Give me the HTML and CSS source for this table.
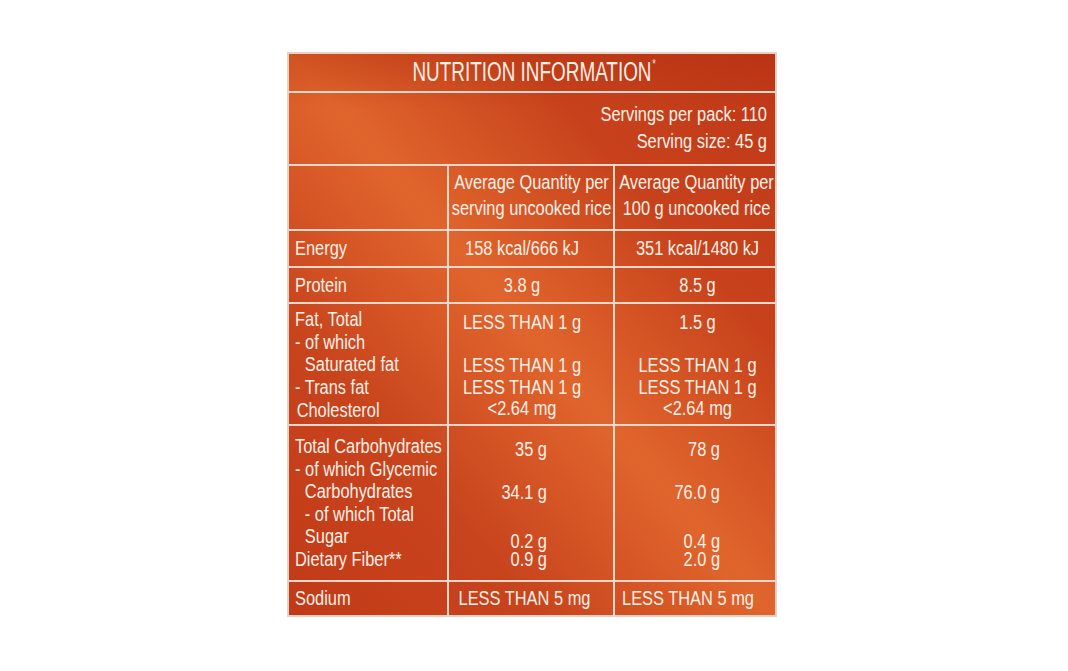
FILE: index.html
```html
<!DOCTYPE html>
<html lang="en">
<head>
<meta charset="utf-8">
<title>Nutrition Information</title>
<link rel="stylesheet" href="styles.css">
</head>
<body>
<div class="panel">
  <div class="title"><div class="sx tx">NUTRITION INFORMATION<sup class="star">*</sup></div></div>
  <div class="servings">
    <div class="sx">
      <div>Servings per pack: 110</div>
      <div>Serving size: 45 g</div>
    </div>
  </div>
  <div class="row header">
    <div class="c1"></div>
    <div class="c2"><div class="sx"><div>Average Quantity per</div><div>serving uncooked rice</div></div></div>
    <div class="c3"><div class="sx"><div>Average Quantity per</div><div>100 g uncooked rice</div></div></div>
  </div>
  <div class="row energy">
    <div class="c1 label"><div class="sx">Energy</div></div>
    <div class="c2 val2"><div class="sx">158 kcal/666 kJ</div></div>
    <div class="c3 val3"><div class="sx">351 kcal/1480 kJ</div></div>
  </div>
  <div class="row protein">
    <div class="c1 label"><div class="sx">Protein</div></div>
    <div class="c2 val2"><div class="sx">3.8 g</div></div>
    <div class="c3 val3"><div class="sx">8.5 g</div></div>
  </div>
  <div class="row fat">
    <div class="c1 labels">
      <div class="sx">
        <div>Fat, Total</div>
        <div>- of which</div>
        <div class="ind">Saturated fat</div>
        <div>- Trans fat</div>
        <div class="ind1">Cholesterol</div>
      </div>
    </div>
    <div class="c2 val2 lines">
      <div class="sx">
        <div>LESS THAN 1 g</div>
        <div class="blank"></div>
        <div>LESS THAN 1 g</div>
        <div>LESS THAN 1 g</div>
        <div>&lt;2.64 mg</div>
      </div>
    </div>
    <div class="c3 val3 lines">
      <div class="sx">
        <div>1.5 g</div>
        <div class="blank"></div>
        <div>LESS THAN 1 g</div>
        <div>LESS THAN 1 g</div>
        <div>&lt;2.64 mg</div>
      </div>
    </div>
  </div>
  <div class="row carbs">
    <div class="c1 labels">
      <div class="sx">
        <div>Total Carbohydrates</div>
        <div>- of which Glycemic</div>
        <div class="ind">Carbohydrates</div>
        <div class="ind">- of which Total</div>
        <div class="ind">Sugar</div>
        <div>Dietary Fiber**</div>
      </div>
    </div>
    <div class="c2 cval2">
      <div class="sx">
        <div class="cl">35 g</div>
        <div class="cl blank"></div>
        <div class="cl">34.1 g</div>
        <div class="cl blank"></div>
        <div class="tight"><div>0.2 g</div><div>0.9 g</div></div>
      </div>
    </div>
    <div class="c3 cval3">
      <div class="sx">
        <div class="cl">78 g</div>
        <div class="cl blank"></div>
        <div class="cl">76.0 g</div>
        <div class="cl blank"></div>
        <div class="tight"><div>0.4 g</div><div>2.0 g</div></div>
      </div>
    </div>
  </div>
  <div class="row sodium">
    <div class="c1 label"><div class="sx">Sodium</div></div>
    <div class="c2 sval2"><div class="sx">LESS THAN 5 mg</div></div>
    <div class="c3 sval3"><div class="sx">LESS THAN 5 mg</div></div>
  </div>
</div>
</body>
</html>
```
FILE: styles.css
```css
* { box-sizing: border-box; }
html, body { margin: 0; padding: 0; background: #ffffff; }
body {
  font-family: "Liberation Sans", Arial, sans-serif;
  font-size: 20px;
  color: #fcefe6;
}
.panel {
  margin: 52px 0 0 287px;
  width: 490px;
  height: 565px;
  border: 2px solid #e9d0c5;
  background:
    linear-gradient(to bottom, rgba(175, 45, 12, 0.35) 0px, rgba(175, 45, 12, 0) 55px),
    linear-gradient(to bottom left,
      #c03818 0%, #c7421c 26%, #d75826 41%, #e0652d 50%, #d85927 59%, #c8441d 74%, #c13a18 100%);
  display: flex;
  flex-direction: column;
}
/* condensed lettering: each cell's text block is drawn narrower */
.sx {
  width: calc(100% / 0.82);
  transform: scaleX(0.82);
  transform-origin: left top;
  white-space: nowrap;
}
.title {
  height: 39px;
  border-bottom: 2px solid #f1d8cb;
  text-align: center;
  font-size: 27px;
  line-height: 37px;
}
.title .tx {
  width: calc(100% / 0.70);
  transform: scaleX(0.70);
  padding-left: 6px;
}
.star {
  font-size: 13px;
  vertical-align: top;
  line-height: 1;
  position: relative;
  top: 3px;
  margin-left: 1px;
}
.servings {
  height: 73px;
  border-bottom: 2px solid #f1d8cb;
  text-align: right;
  padding: 8px 8px 0 0;
  line-height: 26.5px;
}
.row {
  display: flex;
  border-bottom: 2px solid #f1d8cb;
}
.row.sodium { border-bottom: none; }
.c1 {
  width: 160px;
  border-right: 2px solid #f1d8cb;
  flex: none;
}
.c2 {
  width: 166px;
  border-right: 2px solid #f1d8cb;
  flex: none;
  text-align: center;
}
.c3 {
  flex: 1;
  min-width: 0;
  text-align: center;
}
.header { height: 65px; }
.header .c2, .header .c3 { line-height: 26px; padding-top: 3px; }
.header .c2 { padding-left: 1px; }
.header .c3 { padding-left: 3px; }

.energy { height: 37px; line-height: 35px; }
.protein { height: 36px; line-height: 34px; }
.sodium { height: 33px; line-height: 33px; }

.label { padding-left: 6px; }
.val2 { padding-right: 18px; }
.val3 { padding-left: 5px; }
.sval2 { padding-right: 13px; }
.sval3 { padding-right: 14px; }

.fat { height: 122px; }
.labels { padding-left: 6px; line-height: 22.7px; }
.fat .labels { padding-top: 4px; }
.ind { padding-left: 12px; }
.ind1 { padding-left: 2px; }
.lines { line-height: 21.5px; padding-top: 8px; }
.blank { height: 21.5px; }

.carbs { height: 156px; }
.carbs .labels { padding-top: 9px; line-height: 22.6px; }
.cval2, .cval3 { text-align: right; padding-top: 13px; }
.cval2 { padding-right: 66px; }
.cval3 { padding-right: 55px; }
.cl { line-height: 21.65px; }
.cl.blank { height: 21.65px; }
.tight { line-height: 18.7px; margin-top: 6px; }
```
